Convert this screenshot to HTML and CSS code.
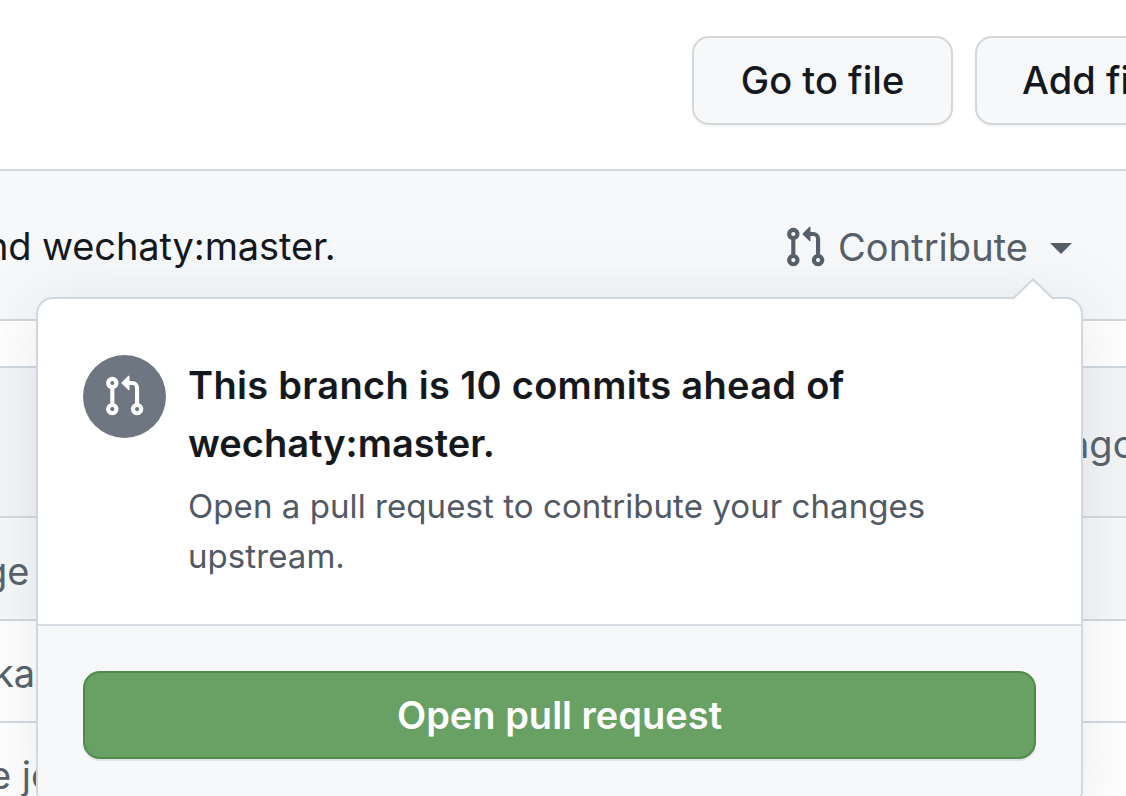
FILE: index.html
```html
<!DOCTYPE html>
<html lang="en">
<head>
<meta charset="utf-8">
<title>Contribute</title>
<link rel="stylesheet" href="styles.css">
</head>
<body>
<svg class="defs" width="0" height="0"><symbol id="pr" viewBox="0 0 16 16"><path d="M7.177 3.073L9.573.677A.25.25 0 0110 .854v4.792a.25.25 0 01-.427.177L7.177 3.427a.25.25 0 010-.354zM3.75 2.5a.75.75 0 100 1.5.75.75 0 000-1.5zm-2.25.75a2.25 2.25 0 113 2.122v5.256a2.251 2.251 0 11-1.5 0V5.372A2.25 2.25 0 011.5 3.25zM11 2.5h-1V4h1a1 1 0 011 1v5.628a2.251 2.251 0 101.5 0V5A2.5 2.5 0 0011 2.5zm1 10.25a.75.75 0 111.5 0 .75.75 0 01-1.5 0zM3.75 12a.75.75 0 100 1.5.75.75 0 000-1.5z"/></symbol></svg>
<div class="page">
  <header class="actions">
    <button class="btn">Go to file</button>
    <button class="btn add">Add file</button>
  </header>
  <section class="branch">
    <div class="status">nd wechaty:master.</div>
    <div class="contribute"><svg class="icon"><use href="#pr"/></svg><span class="label">Contribute</span><span class="caret"></span></div>
  </section>
  <div class="gap"></div>
  <main class="files">
    <div class="row commit"><span></span><span class="ago">ago</span></div>
    <div class="row tint"><span class="page-cell">ge</span></div>
    <div class="row"><span class="ka-cell">ka</span></div>
    <div class="row"><span class="jo-cell">e jo</span></div>
  </main>
  <aside class="popover">
    <svg class="arrow" viewBox="0 0 44 22"><path class="fill" d="M1 22L22 1.5L43 22z"/><path class="edge" d="M1.5 21L22 1.5L42.5 21"/></svg>
    <div class="message">
      <div class="badge"><svg class="icon"><use href="#pr"/></svg></div>
      <div class="copy">
        <h1><span class="wide">This branch is 10 commits ahead of</span><br>wechaty:master.</h1>
        <p>Open a pull request to contribute your changes<br>upstream.</p>
      </div>
    </div>
    <div class="footer"><button class="primary">Open pull request</button></div>
  </aside>
</div>
</body>
</html>
```
FILE: styles.css
```css
* { box-sizing: border-box; }
body { margin: 0; background: #fff; color: #15191e; font-family: Inter, "Liberation Sans", sans-serif; font-size: 38px; }
.defs { position: absolute; }
.page { position: relative; width: 1126px; height: 796px; overflow: hidden; }
button { font-family: inherit; font-size: 38px; white-space: nowrap; padding: 0; }
.actions { height: 169px; padding: 36px 0 0 692px; display: flex; gap: 22px; }
.btn { flex: none; width: 261px; height: 89px; padding-bottom: 2px; border: 2px solid #d5d8da; border-radius: 17px; background: #f6f8fa; color: #15191e; font-weight: 550; letter-spacing: .05px; box-shadow: 0 2px 1px rgba(27,31,36,.04); }
.add { padding-left: 45px; text-align: left; }
.branch { height: 152px; border: solid #d0d7de; border-width: 2px 0; background: #f6f8fa; display: flex; justify-content: space-between; align-items: center; }
.status { margin: 2px 0 0 -14px; letter-spacing: -.12px; }
.contribute { display: flex; align-items: center; color: #57606a; margin: 3px 54px 0 0; }
.icon { width: 44px; height: 44px; fill: currentColor; flex: none; }
.label { margin-left: 11px; letter-spacing: .05px; }
.caret { margin: 4px 0 0 22px; border: 11px solid transparent; border-top-color: #57606a; border-bottom: 0; }
.gap { height: 45px; }
.files { border-top: 2px solid #d0d7de; color: #57606a; }
.row { height: 102px; padding-top: 4px; border-bottom: 2px solid #d3d8de; display: flex; align-items: center; justify-content: space-between; white-space: nowrap; }
.commit { height: 150px; background: #f4f5f7; }
.tint { height: 103px; background: #f6f8fa; }
.ago { width: 58px; }
.page-cell { margin-left: -16px; }
.ka-cell { margin-left: -7px; }
.jo-cell { margin-left: -11px; }
.popover { position: absolute; left: 36px; top: 297px; width: 1047px; height: 510px; border: 2px solid #d0d7de; border-radius: 17px; background: #fff; box-shadow: 0 8px 66px rgba(115,118,122,.17); }
.arrow { position: absolute; left: 973px; top: -21px; width: 44px; height: 22px; }
.fill { fill: #fff; }
.edge { fill: none; stroke: #d0d7de; stroke-width: 2; }
.message { display: flex; height: 327px; padding: 56px 44px 0 45px; gap: 22px; border-bottom: 2px solid #d8dbe1; }
.badge { flex: none; width: 83px; height: 83px; border-radius: 50%; background: #6e7781; color: #fff; display: flex; align-items: center; justify-content: center; }
.badge .icon { margin: -1px 0 0 -1px; }
h1 { margin: 1px 0 0; font-size: 38px; line-height: 58px; font-weight: 600; white-space: nowrap; }
.wide { letter-spacing: .3px; }
p { margin: 9px 0 0; font-size: 33px; line-height: 50px; color: #505965; white-space: nowrap; letter-spacing: .07px; }
.footer { height: 179px; padding: 45px 45px 0; background: #f6f8fa; border-radius: 0 0 15px 15px; }
.primary { display: block; width: 953px; height: 88px; border: 2px solid #518b4c; border-radius: 17px; background: #69a063; color: #fff; font-weight: 600; box-shadow: 0 2px 1px rgba(27,31,36,.1); }
```
